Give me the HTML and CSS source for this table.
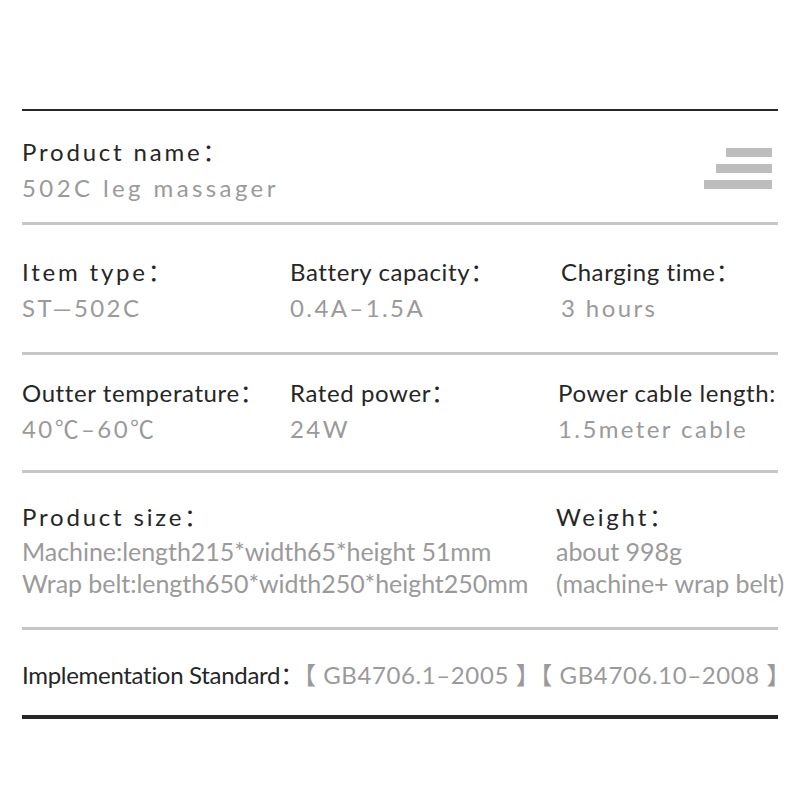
FILE: index.html
```html
<!DOCTYPE html>
<html lang="en">
<head>
<meta charset="utf-8">
<title>502C leg massager</title>
<link rel="stylesheet" href="styles.css">
</head>
<body>
<div class="sheet">
  <div class="row row-name">
    <div class="cell">
      <div class="label wide">Product name：</div>
      <div class="value extra">502C leg massager</div>
    </div>
    <svg class="menu-icon" width="68" height="42" viewBox="0 0 68 42" aria-hidden="true">
      <rect x="22" y="0" width="46" height="9" fill="#bdbdbd"/>
      <rect x="12" y="16" width="56" height="9" fill="#bdbdbd"/>
      <rect x="0" y="32" width="68" height="9" fill="#bdbdbd"/>
    </svg>
  </div>
  <div class="row row-grid row-2">
    <div class="cell">
      <div class="label wide">Item type：</div>
      <div class="value">ST—502C</div>
    </div>
    <div class="cell">
      <div class="label">Battery capacity：</div>
      <div class="value">0.4A–1.5A</div>
    </div>
    <div class="cell">
      <div class="label">Charging time：</div>
      <div class="value">3 hours</div>
    </div>
  </div>
  <div class="row row-grid row-3">
    <div class="cell">
      <div class="label">Outter temperature：</div>
      <div class="value">40℃–60℃</div>
    </div>
    <div class="cell">
      <div class="label">Rated power：</div>
      <div class="value">24W</div>
    </div>
    <div class="cell">
      <div class="label">Power cable length:</div>
      <div class="value">1.5meter cable</div>
    </div>
  </div>
  <div class="row row-size">
    <div class="cell">
      <div class="label wide">Product size：</div>
      <div class="value small">Machine:length215*width65*height 51mm</div>
      <div class="value small">Wrap belt:length650*width250*height250mm</div>
    </div>
    <div class="cell">
      <div class="label wide">Weight：</div>
      <div class="value small">about 998g</div>
      <div class="value small">(machine+ wrap belt)</div>
    </div>
  </div>
  <div class="row row-std">
    <span class="std-label">Implementation Standard：</span><span class="std-value">【 GB4706.1–2005 】【 GB4706.10–2008 】</span>
  </div>
</div>
</body>
</html>
```
FILE: styles.css
```css
html, body {
  margin: 0;
  padding: 0;
  background: #ffffff;
}

.sheet {
  margin: 109px 22px 0 22px;
  width: 756px;
  border-top: 2px solid #262626;
  font-family: "Lato", "Noto Sans CJK SC", sans-serif;
}

.row {
  border-bottom: 3px solid #c6c6c6;
}

.label {
  color: #262626;
  font-size: 24px;
  line-height: 36px;
  letter-spacing: 0.6px;
  white-space: nowrap;
}

.label.wide {
  letter-spacing: 2.8px;
}

.value {
  color: #9a9a9a;
  font-size: 24px;
  line-height: 36px;
  letter-spacing: 2.4px;
  white-space: nowrap;
}

.value.extra {
  letter-spacing: 3.4px;
}

.value.small {
  font-size: 25px;
  letter-spacing: -0.05px;
  line-height: 32px;
}

.row-name {
  display: flex;
  justify-content: space-between;
  align-items: flex-start;
  padding: 23px 0 16px 0;
}

.menu-icon {
  margin-top: 14px;
  margin-right: 6px;
}

.row-grid {
  display: grid;
  grid-template-columns: 268px 271px 1fr;
}

.row-2 {
  padding: 29px 0 26px 0;
}

.row-3 {
  padding: 20px 0 23px 0;
  grid-template-columns: 268px 268px 1fr;
}

.row-size {
  display: grid;
  grid-template-columns: 534px 1fr;
  padding: 26px 0 28px 0;
}

.row-std {
  border-bottom: 4px solid #262626;
  padding: 27px 0 19px 0;
  white-space: nowrap;
  line-height: 36px;
}

.std-label {
  color: #262626;
  font-size: 24px;
  letter-spacing: -0.3px;
}

.std-value {
  color: #9a9a9a;
  font-size: 24px;
  letter-spacing: 0.6px;
}
```
